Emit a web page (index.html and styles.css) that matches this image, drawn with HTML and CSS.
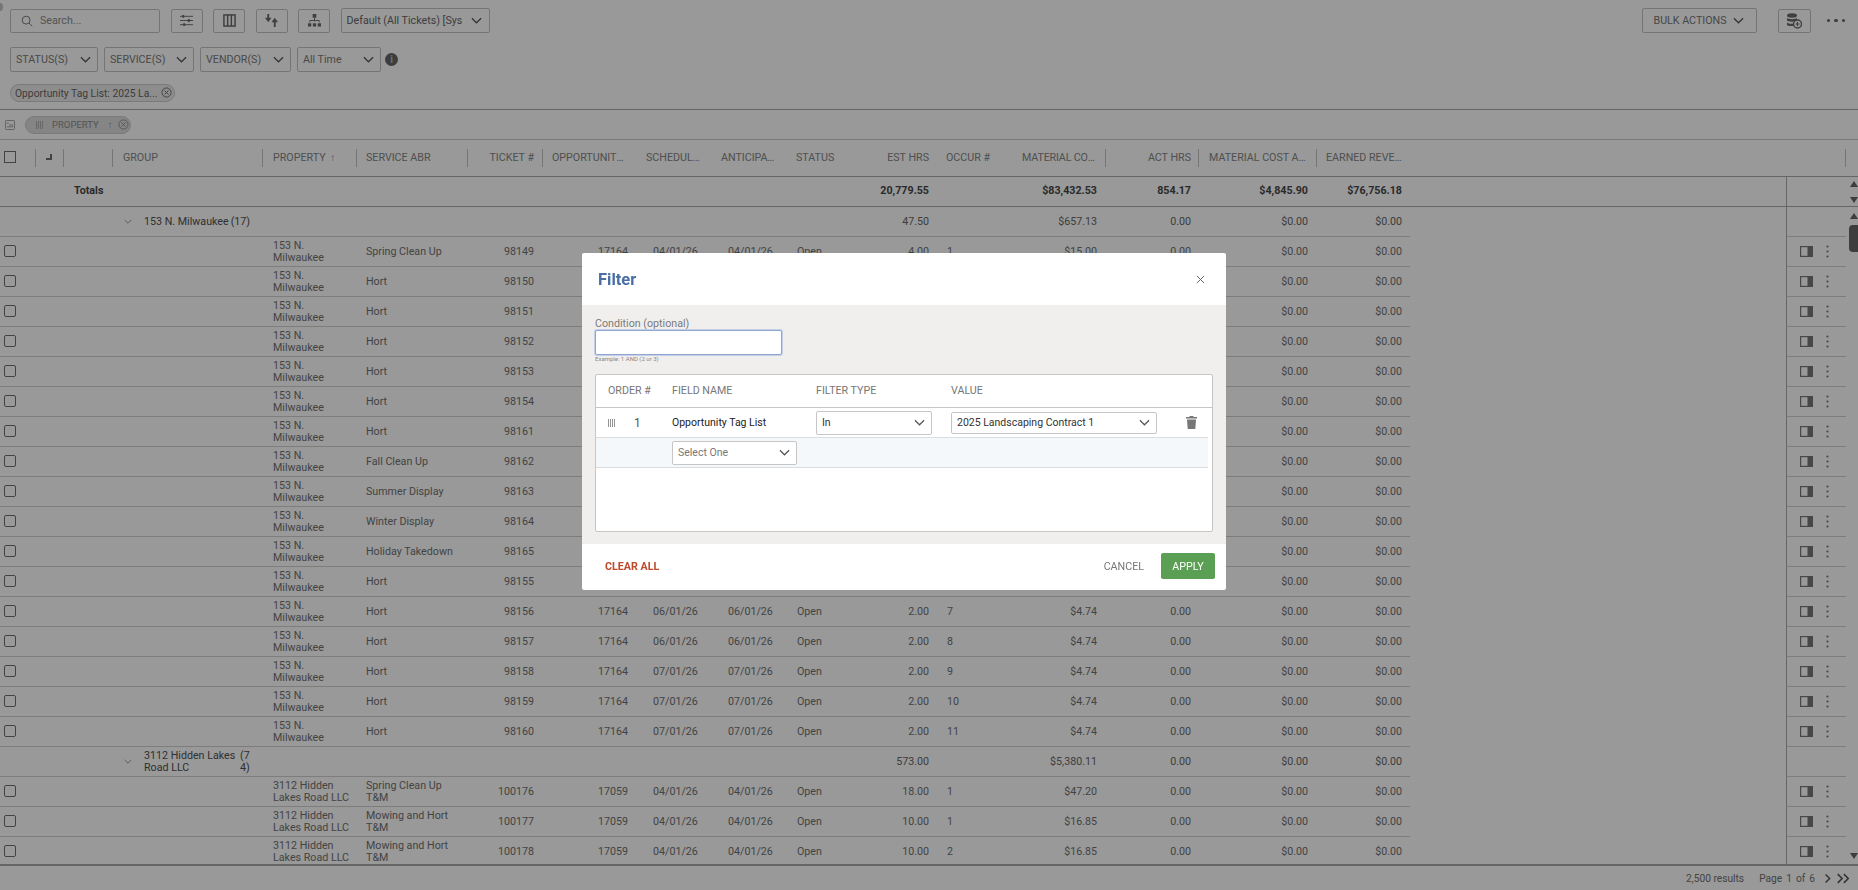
FILE: index.html
```html
<!DOCTYPE html>
<html lang="en">
<head>
<meta charset="utf-8">
<title>Tickets</title>
<link rel="stylesheet" href="styles.css">
</head>
<body>
<svg class="defs" aria-hidden="true">
  <symbol id="i-panel" viewBox="0 0 13 11"><rect x=".6" y=".6" width="11.800" height="9.800" fill="none" stroke="currentColor" stroke-width="1.200"/><rect x="7.500" y="1" width="5" height="9" fill="currentColor"/></symbol>
  <symbol id="i-kebab" viewBox="0 0 3 13"><circle cx="1.5" cy="1.5" r="1.1" fill="currentColor"/><circle cx="1.5" cy="6.5" r="1.1" fill="currentColor"/><circle cx="1.5" cy="11.5" r="1.1" fill="currentColor"/></symbol>
  <symbol id="i-chev" viewBox="0 0 12 7"><path d="M1 1l5 5 5-5" fill="none" stroke="currentColor" stroke-width="1.3"/></symbol>
  <symbol id="i-handle" viewBox="0 0 7 8"><path d="M.5 0v8M2.500 0v8M4.500 0v8M6.500 0v8" stroke="currentColor" stroke-width=".8"/></symbol>
  <symbol id="i-xc" viewBox="0 0 12 12"><circle cx="6" cy="6" r="5" fill="none" stroke="currentColor" stroke-width="1"/><path d="M3.8 3.8l4.4 4.4M8.2 3.8l-4.4 4.4" stroke="currentColor" stroke-width="1"/></symbol>
</svg>
<div class="corner-dot"></div>
<div class="page">
  <div class="toolbar">
    <div class="search"><svg class="ic-search" viewBox="0 0 14 14"><circle cx="6" cy="6" r="4.6" fill="none" stroke="currentColor" stroke-width="1"/><path d="M9.5 9.5l3.6 3.6" stroke="currentColor" stroke-width="1"/></svg><span>Search...</span></div>
    <button class="tool"><svg viewBox="0 0 14 14" class="ic"><path d="M0 2.5h14M0 7h14M0 11.5h14" stroke="currentColor" stroke-width="1"/><path d="M3.5 1v3M9.5 5.5v3M4.5 10v3" stroke="currentColor" stroke-width="2"/></svg></button>
    <button class="tool"><svg viewBox="0 0 14 14" class="ic"><rect x="1" y="1" width="12" height="12" fill="none" stroke="currentColor" stroke-width="1.6"/><path d="M5 1v12M9 1v12" stroke="currentColor" stroke-width="1.6"/></svg></button>
    <button class="tool"><svg viewBox="0 0 14 14" class="ic"><path d="M3.500 0v5" stroke="currentColor" stroke-width="2"/><path d="M0 4h7L3.500 9z" fill="currentColor"/><path d="M10.500 14V8" stroke="currentColor" stroke-width="2"/><path d="M7 9h7L10.500 4z" fill="currentColor"/></svg></button>
    <button class="tool"><svg viewBox="0 0 14 14" class="ic"><rect x="5" y="0" width="4" height="4" fill="currentColor"/><path d="M7 4v4M2 9V7h10v2" fill="none" stroke="currentColor" stroke-width="1"/><rect x="0" y="10" width="3.500" height="3.500" fill="currentColor"/><rect x="5.250" y="10" width="3.500" height="3.500" fill="currentColor"/><rect x="10.500" y="10" width="3.500" height="3.500" fill="currentColor"/></svg></button>
    <div class="sel sel-view"><span>Default (All Tickets) [Sys</span><svg class="chev"><use href="#i-chev"/></svg></div>
    <div class="bulk"><span>BULK ACTIONS</span><svg class="chev"><use href="#i-chev"/></svg></div>
    <button class="tool tool-db"><svg viewBox="0 0 16 16" class="ic ic-db"><ellipse cx="6" cy="2.500" rx="5" ry="2.200" fill="currentColor"/><path d="M1 5c1 1.500 9 1.500 10 0v2.500c-1 1.500-9 1.500-10 0zM1 9.500c1 1.500 6 1.500 7 1v2c-1 .8-6 .8-7-.5z" fill="currentColor"/><circle cx="11.500" cy="11" r="4" fill="none" stroke="currentColor" stroke-width="1.400"/><path d="M9.500 11h4M11.500 9v4" stroke="currentColor" stroke-width="1.200"/></svg></button>
    <div class="more"><i></i><i></i><i></i></div>
  </div>
  <div class="filters">
    <div class="sel sel-status"><span>STATUS(S)</span><svg class="chev"><use href="#i-chev"/></svg></div>
    <div class="sel sel-service"><span>SERVICE(S)</span><svg class="chev"><use href="#i-chev"/></svg></div>
    <div class="sel sel-vendor"><span>VENDOR(S)</span><svg class="chev"><use href="#i-chev"/></svg></div>
    <div class="sel sel-time"><span>All Time</span><svg class="chev"><use href="#i-chev"/></svg></div>
    <span class="info">i</span>
  </div>
  <div class="tags"><div class="tag"><span>Opportunity Tag List: 2025 La...</span><svg class="xc"><use href="#i-xc"/></svg></div></div>
  <div class="groupbar">
    <svg class="ic-groupbar" viewBox="0 0 11 11"><rect x=".5" y=".5" width="10" height="10" rx="1" fill="none" stroke="currentColor"/><path d="M2 3.500h2M4.500 5.500h4.500M2 7.500h7" stroke="currentColor"/></svg>
    <div class="gchip"><svg class="handle"><use href="#i-handle"/></svg><span>PROPERTY</span><span class="gchip-arrow">↑</span><svg class="xc"><use href="#i-xc"/></svg></div>
  </div>
  <div class="grid-area">
    <div class="grid-wrap">
      <table class="grid">
        <thead>
          <tr><th class="sep"><span class="cb cb-sq"></span></th><th class="sep"><svg class="ic-corner" viewBox="0 0 6 6"><path d="M4 0h2v6H0V4h4z" fill="currentColor"/></svg></th><th class="sep"></th><th class="sep">GROUP</th><th class="sep">PROPERTY <span class="sort">↑</span></th><th class="sep">SERVICE ABR</th><th class="sep">TICKET #</th><th>OPPORTUNITY TAG</th><th>SCHEDULED DATE</th><th>ANTICIPATED DATE</th><th>STATUS</th><th>EST HRS</th><th>OCCUR #</th><th class="sep">MATERIAL COST EST</th><th class="sep">ACT HRS</th><th class="sep">MATERIAL COST ACTUAL</th><th>EARNED REVENUE</th><th class="fill"></th><th class="sep-end"></th></tr>
        </thead>
        <tbody>
          <tr class="totals"><td></td><td></td><td class="tot-label">Totals</td><td></td><td></td><td></td><td></td><td></td><td></td><td></td><td></td><td>20,779.55</td><td></td><td>$83,432.53</td><td>854.17</td><td>$4,845.90</td><td>$76,756.18</td><td></td><td class="act"></td></tr>
          <tr class="grp"><td></td><td></td><td></td><td><div class="gcell"><svg class="gchev"><use href="#i-chev"/></svg><span class="gname">153 N. Milwaukee</span><span class="gcount">(17)</span></div></td><td></td><td></td><td></td><td></td><td></td><td></td><td></td><td>47.50</td><td></td><td>$657.13</td><td>0.00</td><td>$0.00</td><td>$0.00</td><td class="fill"></td><td class="act"></td></tr>
          <tr><td><span class="cb"></span></td><td></td><td></td><td></td><td>153 N. Milwaukee</td><td>Spring Clean Up</td><td>98149</td><td>17164</td><td>04/01/26</td><td>04/01/26</td><td>Open</td><td>4.00</td><td>1</td><td>$15.00</td><td>0.00</td><td>$0.00</td><td>$0.00</td><td class="fill"></td><td class="act"><svg class="panel"><use href="#i-panel"/></svg><svg class="kebab"><use href="#i-kebab"/></svg></td></tr>
          <tr><td><span class="cb"></span></td><td></td><td></td><td></td><td>153 N. Milwaukee</td><td>Hort</td><td>98150</td><td>17164</td><td>04/01/26</td><td>04/01/26</td><td>Open</td><td>2.00</td><td>1</td><td>$4.74</td><td>0.00</td><td>$0.00</td><td>$0.00</td><td class="fill"></td><td class="act"><svg class="panel"><use href="#i-panel"/></svg><svg class="kebab"><use href="#i-kebab"/></svg></td></tr>
          <tr><td><span class="cb"></span></td><td></td><td></td><td></td><td>153 N. Milwaukee</td><td>Hort</td><td>98151</td><td>17164</td><td>04/01/26</td><td>04/01/26</td><td>Open</td><td>2.00</td><td>2</td><td>$4.74</td><td>0.00</td><td>$0.00</td><td>$0.00</td><td class="fill"></td><td class="act"><svg class="panel"><use href="#i-panel"/></svg><svg class="kebab"><use href="#i-kebab"/></svg></td></tr>
          <tr><td><span class="cb"></span></td><td></td><td></td><td></td><td>153 N. Milwaukee</td><td>Hort</td><td>98152</td><td>17164</td><td>04/01/26</td><td>04/01/26</td><td>Open</td><td>2.00</td><td>3</td><td>$4.74</td><td>0.00</td><td>$0.00</td><td>$0.00</td><td class="fill"></td><td class="act"><svg class="panel"><use href="#i-panel"/></svg><svg class="kebab"><use href="#i-kebab"/></svg></td></tr>
          <tr><td><span class="cb"></span></td><td></td><td></td><td></td><td>153 N. Milwaukee</td><td>Hort</td><td>98153</td><td>17164</td><td>05/01/26</td><td>05/01/26</td><td>Open</td><td>2.00</td><td>4</td><td>$4.74</td><td>0.00</td><td>$0.00</td><td>$0.00</td><td class="fill"></td><td class="act"><svg class="panel"><use href="#i-panel"/></svg><svg class="kebab"><use href="#i-kebab"/></svg></td></tr>
          <tr><td><span class="cb"></span></td><td></td><td></td><td></td><td>153 N. Milwaukee</td><td>Hort</td><td>98154</td><td>17164</td><td>05/01/26</td><td>05/01/26</td><td>Open</td><td>2.00</td><td>5</td><td>$4.74</td><td>0.00</td><td>$0.00</td><td>$0.00</td><td class="fill"></td><td class="act"><svg class="panel"><use href="#i-panel"/></svg><svg class="kebab"><use href="#i-kebab"/></svg></td></tr>
          <tr><td><span class="cb"></span></td><td></td><td></td><td></td><td>153 N. Milwaukee</td><td>Hort</td><td>98161</td><td>17164</td><td>05/01/26</td><td>05/01/26</td><td>Open</td><td>2.00</td><td>6</td><td>$4.74</td><td>0.00</td><td>$0.00</td><td>$0.00</td><td class="fill"></td><td class="act"><svg class="panel"><use href="#i-panel"/></svg><svg class="kebab"><use href="#i-kebab"/></svg></td></tr>
          <tr><td><span class="cb"></span></td><td></td><td></td><td></td><td>153 N. Milwaukee</td><td>Fall Clean Up</td><td>98162</td><td>17164</td><td>10/01/26</td><td>10/01/26</td><td>Open</td><td>4.00</td><td>1</td><td>$15.00</td><td>0.00</td><td>$0.00</td><td>$0.00</td><td class="fill"></td><td class="act"><svg class="panel"><use href="#i-panel"/></svg><svg class="kebab"><use href="#i-kebab"/></svg></td></tr>
          <tr><td><span class="cb"></span></td><td></td><td></td><td></td><td>153 N. Milwaukee</td><td>Summer Display</td><td>98163</td><td>17164</td><td>05/15/26</td><td>05/15/26</td><td>Open</td><td>4.00</td><td>1</td><td>$15.00</td><td>0.00</td><td>$0.00</td><td>$0.00</td><td class="fill"></td><td class="act"><svg class="panel"><use href="#i-panel"/></svg><svg class="kebab"><use href="#i-kebab"/></svg></td></tr>
          <tr><td><span class="cb"></span></td><td></td><td></td><td></td><td>153 N. Milwaukee</td><td>Winter Display</td><td>98164</td><td>17164</td><td>11/15/26</td><td>11/15/26</td><td>Open</td><td>4.00</td><td>1</td><td>$15.00</td><td>0.00</td><td>$0.00</td><td>$0.00</td><td class="fill"></td><td class="act"><svg class="panel"><use href="#i-panel"/></svg><svg class="kebab"><use href="#i-kebab"/></svg></td></tr>
          <tr><td><span class="cb"></span></td><td></td><td></td><td></td><td>153 N. Milwaukee</td><td>Holiday Takedown</td><td>98165</td><td>17164</td><td>01/15/26</td><td>01/15/26</td><td>Open</td><td>4.00</td><td>1</td><td>$15.00</td><td>0.00</td><td>$0.00</td><td>$0.00</td><td class="fill"></td><td class="act"><svg class="panel"><use href="#i-panel"/></svg><svg class="kebab"><use href="#i-kebab"/></svg></td></tr>
          <tr><td><span class="cb"></span></td><td></td><td></td><td></td><td>153 N. Milwaukee</td><td>Hort</td><td>98155</td><td>17164</td><td>06/01/26</td><td>06/01/26</td><td>Open</td><td>2.00</td><td>6</td><td>$4.74</td><td>0.00</td><td>$0.00</td><td>$0.00</td><td class="fill"></td><td class="act"><svg class="panel"><use href="#i-panel"/></svg><svg class="kebab"><use href="#i-kebab"/></svg></td></tr>
          <tr><td><span class="cb"></span></td><td></td><td></td><td></td><td>153 N. Milwaukee</td><td>Hort</td><td>98156</td><td>17164</td><td>06/01/26</td><td>06/01/26</td><td>Open</td><td>2.00</td><td>7</td><td>$4.74</td><td>0.00</td><td>$0.00</td><td>$0.00</td><td class="fill"></td><td class="act"><svg class="panel"><use href="#i-panel"/></svg><svg class="kebab"><use href="#i-kebab"/></svg></td></tr>
          <tr><td><span class="cb"></span></td><td></td><td></td><td></td><td>153 N. Milwaukee</td><td>Hort</td><td>98157</td><td>17164</td><td>06/01/26</td><td>06/01/26</td><td>Open</td><td>2.00</td><td>8</td><td>$4.74</td><td>0.00</td><td>$0.00</td><td>$0.00</td><td class="fill"></td><td class="act"><svg class="panel"><use href="#i-panel"/></svg><svg class="kebab"><use href="#i-kebab"/></svg></td></tr>
          <tr><td><span class="cb"></span></td><td></td><td></td><td></td><td>153 N. Milwaukee</td><td>Hort</td><td>98158</td><td>17164</td><td>07/01/26</td><td>07/01/26</td><td>Open</td><td>2.00</td><td>9</td><td>$4.74</td><td>0.00</td><td>$0.00</td><td>$0.00</td><td class="fill"></td><td class="act"><svg class="panel"><use href="#i-panel"/></svg><svg class="kebab"><use href="#i-kebab"/></svg></td></tr>
          <tr><td><span class="cb"></span></td><td></td><td></td><td></td><td>153 N. Milwaukee</td><td>Hort</td><td>98159</td><td>17164</td><td>07/01/26</td><td>07/01/26</td><td>Open</td><td>2.00</td><td>10</td><td>$4.74</td><td>0.00</td><td>$0.00</td><td>$0.00</td><td class="fill"></td><td class="act"><svg class="panel"><use href="#i-panel"/></svg><svg class="kebab"><use href="#i-kebab"/></svg></td></tr>
          <tr><td><span class="cb"></span></td><td></td><td></td><td></td><td>153 N. Milwaukee</td><td>Hort</td><td>98160</td><td>17164</td><td>07/01/26</td><td>07/01/26</td><td>Open</td><td>2.00</td><td>11</td><td>$4.74</td><td>0.00</td><td>$0.00</td><td>$0.00</td><td class="fill"></td><td class="act"><svg class="panel"><use href="#i-panel"/></svg><svg class="kebab"><use href="#i-kebab"/></svg></td></tr>
          <tr class="grp"><td></td><td></td><td></td><td><div class="gcell"><svg class="gchev"><use href="#i-chev"/></svg><span class="gname gname-wrap">3112 Hidden Lakes Road LLC</span><span class="gcount gcount-wrap">(74)</span></div></td><td></td><td></td><td></td><td></td><td></td><td></td><td></td><td>573.00</td><td></td><td>$5,380.11</td><td>0.00</td><td>$0.00</td><td>$0.00</td><td class="fill"></td><td class="act"></td></tr>
          <tr><td><span class="cb"></span></td><td></td><td></td><td></td><td>3112 Hidden Lakes Road LLC</td><td>Spring Clean Up T&amp;M</td><td>100176</td><td>17059</td><td>04/01/26</td><td>04/01/26</td><td>Open</td><td>18.00</td><td>1</td><td>$47.20</td><td>0.00</td><td>$0.00</td><td>$0.00</td><td class="fill"></td><td class="act"><svg class="panel"><use href="#i-panel"/></svg><svg class="kebab"><use href="#i-kebab"/></svg></td></tr>
          <tr><td><span class="cb"></span></td><td></td><td></td><td></td><td>3112 Hidden Lakes Road LLC</td><td>Mowing and Hort T&amp;M</td><td>100177</td><td>17059</td><td>04/01/26</td><td>04/01/26</td><td>Open</td><td>10.00</td><td>1</td><td>$16.85</td><td>0.00</td><td>$0.00</td><td>$0.00</td><td class="fill"></td><td class="act"><svg class="panel"><use href="#i-panel"/></svg><svg class="kebab"><use href="#i-kebab"/></svg></td></tr>
          <tr><td><span class="cb"></span></td><td></td><td></td><td></td><td>3112 Hidden Lakes Road LLC</td><td>Mowing and Hort T&amp;M</td><td>100178</td><td>17059</td><td>04/01/26</td><td>04/01/26</td><td>Open</td><td>10.00</td><td>2</td><td>$16.85</td><td>0.00</td><td>$0.00</td><td>$0.00</td><td class="fill"></td><td class="act"><svg class="panel"><use href="#i-panel"/></svg><svg class="kebab"><use href="#i-kebab"/></svg></td></tr>
        </tbody>
      </table>
    </div>
    <div class="scrollcol">
      <div class="sb-head"></div>
      <div class="sb-totals"><i class="tri-up"></i><i class="tri-down"></i></div>
      <div class="sb-body"><i class="tri-up"></i><b class="thumb"></b><i class="tri-down tri-end"></i></div>
    </div>
  </div>
  <div class="pager">
    <span class="results">2,500 results</span>
    <span>Page</span><span>1</span><span>of</span><span>6</span>
    <svg class="pg" viewBox="0 0 10 12"><path d="M2 1l5 5-5 5" fill="none" stroke="currentColor" stroke-width="1.800"/></svg>
    <svg class="pg pg-2" viewBox="0 0 16 12"><path d="M2 1l5 5-5 5M9 1l5 5-5 5" fill="none" stroke="currentColor" stroke-width="1.800"/></svg>
  </div>
</div>
<div class="overlay">
  <div class="modal">
    <div class="modal-head"><h2>Filter</h2><svg class="close" viewBox="0 0 10 10"><path d="M1 1l8 8M9 1l-8 8" stroke="currentColor" stroke-width="1.100"/></svg></div>
    <div class="modal-body">
      <label class="cond-label">Condition (optional)</label>
      <div class="cond-input"></div>
      <div class="cond-hint">Example: 1 AND (2 or 3)</div>
      <div class="ftable">
        <div class="frow fhead"><span>ORDER #</span><span>FIELD NAME</span><span>FILTER TYPE</span><span>VALUE</span><span></span></div>
        <div class="frow fdata">
          <span class="order"><svg class="handle"><use href="#i-handle"/></svg><b>1</b></span>
          <span class="fname">Opportunity Tag List</span>
          <div class="msel msel-type"><span>In</span><svg class="chev"><use href="#i-chev"/></svg></div>
          <div class="msel msel-value"><span>2025 Landscaping Contract 1</span><svg class="chev"><use href="#i-chev"/></svg></div>
          <svg class="trash" viewBox="0 0 11 13"><path d="M3.500 1V0h4v1H11v1.500H0V1zM1 3.500h9L9.300 13H1.700z" fill="currentColor"/></svg>
        </div>
        <div class="frow fnew">
          <span></span>
          <div class="msel msel-field"><span>Select One</span><svg class="chev"><use href="#i-chev"/></svg></div>
        </div>
      </div>
    </div>
    <div class="modal-foot">
      <button class="btn-clear">CLEAR ALL</button>
      <button class="btn-cancel">CANCEL</button>
      <button class="btn-apply">APPLY</button>
    </div>
  </div>
</div>
</body>
</html>
```
FILE: styles.css
```css
* { box-sizing: border-box; }
html, body { margin: 0; height: 100%; overflow: hidden; }
body { font-family: Roboto, "Liberation Sans", sans-serif; font-size: 10.7px; color: #707070; background: #fff; }
button { font-family: inherit; }
.defs { display: none; }

.corner-dot { position: absolute; left: -3px; top: 3px; width: 6px; height: 8px; border-radius: 50%; background: #c4c4c4; }

.page { height: 100vh; display: flex; flex-direction: column; }

.toolbar { display: flex; align-items: center; height: 25px; margin-top: 8px; padding: 0 13px 0 10px; }
.search { width: 150px; height: 24px; border: 1px solid #c4c4c4; border-radius: 2px; display: flex; align-items: center; padding-left: 10px; gap: 7px; font-size: 10.700px; color: #8a8a8a; }
.ic-search { width: 12px; height: 12px; color: #666; }
.tool { width: 32px; height: 24px; margin-left: 10.500px; border: 1px solid #c4c4c4; border-radius: 2px; background: #fff; padding: 0; display: flex; align-items: center; justify-content: center; color: #6a6a6a; }
.ic { width: 13px; height: 13px; display: block; }
.sel { height: 25px; border: 1px solid #c4c4c4; border-radius: 2px; display: flex; align-items: center; justify-content: space-between; padding: 0 6px 0 5px; font-size: 10.700px; color: #7a7a7a; white-space: nowrap; }
.chev { width: 11px; height: 7px; color: #555; flex: none; }
.sel-view { width: 149px; margin-left: 10.500px; color: #666; padding-right: 7px; }
.bulk { margin-left: auto; width: 115px; height: 25px; border: 1px solid #c4c4c4; border-radius: 2px; display: flex; align-items: center; gap: 6px; padding-left: 11px; font-size: 10.700px; color: #777; }
.tool-db { margin-left: 21px; width: 33px; }
.ic-db { width: 16px; height: 16px; }
.more { margin-left: 16px; display: flex; gap: 4px; }
.more i { width: 3.500px; height: 3.500px; border-radius: 50%; background: #666; }

.filters { display: flex; align-items: center; height: 25px; margin-top: 14px; padding-left: 10px; gap: 6px; }
.sel-status { width: 88px; }
.sel-service { width: 90px; }
.sel-vendor { width: 91px; }
.sel-time { width: 84px; }
.info { width: 13px; height: 13px; border-radius: 50%; background: #666; color: #bbb; font-size: 10px; font-weight: 700; display: flex; align-items: center; justify-content: center; margin-left: -2px; }

.tags { height: 18px; margin-top: 12px; padding-left: 10px; display: flex; }
.tag { width: 165px; height: 18px; border: 1px solid #ccc; border-radius: 9px; background: #ececec; display: flex; align-items: center; gap: 4px; padding-left: 4px; font-size: 10.300px; color: #666; white-space: nowrap; }
.xc { width: 11px; height: 11px; color: #666; flex: none; position: relative; top: -1px; }

.groupbar { height: 30px; margin-top: 7px; border-top: 1px solid #aaa; display: flex; align-items: center; padding-left: 5px; gap: 10px; flex: none; }
.ic-groupbar { width: 10px; height: 10px; color: #999; }
.gchip { width: 106px; height: 18px; border: 1px solid #ccc; border-radius: 9px; background: #dedede; display: flex; align-items: center; padding-left: 10px; font-size: 9.500px; color: #8c8c8c; }
.handle { width: 7px; height: 8px; color: #a0a0a0; margin-right: 9px; flex: none; }
.gchip-arrow { margin: 0 6px 0 9px; }
.gchip .xc { top: 0; color: #8c8c8c; }

.grid-area { flex: 1; min-height: 0; display: flex; border-top: 1px solid #ccc; border-bottom: 2px solid #aaa; }
.grid-wrap { width: 1846px; overflow: hidden; flex: none; }
.grid { width: 1846px; table-layout: fixed; border-collapse: separate; border-spacing: 0; }
.grid th { height: 37px; border-bottom: 1px solid #aaa; font-weight: 400; font-size: 10.700px; color: #858585; text-align: left; padding: 0 8px 2px; white-space: nowrap; overflow: hidden; text-overflow: ellipsis; position: relative; }
.grid td { height: 30px; padding: 0 8px; border-bottom: 1px solid #d0d0d0; line-height: 12px; vertical-align: middle; }
.sep::after, .sep-end::after { content: ""; position: absolute; right: 0; top: 9px; height: 18px; width: 1px; background: #c4c4c4; }

.grid th:nth-child(1) { width: 36px; padding: 0 0 2px 4px; }
.grid th:nth-child(2) { width: 28px; }
.grid th:nth-child(3) { width: 49px; }
.grid th:nth-child(4) { width: 150px; padding-left: 10px; }
.grid th:nth-child(5) { width: 94px; padding-left: 10px; }
.grid th:nth-child(6) { width: 111px; padding-left: 9px; }
.grid th:nth-child(7) { width: 75px; text-align: right; padding-right: 9px; }
.grid th:nth-child(8) { width: 95px; padding-left: 9px; }
.grid th:nth-child(9) { width: 75px; }
.grid th:nth-child(10) { width: 75px; }
.grid th:nth-child(11) { width: 75px; }
.grid th:nth-child(12) { width: 74px; text-align: right; }
.grid th:nth-child(13) { width: 85px; padding-left: 9px; }
.grid th:nth-child(14) { width: 84px; text-align: right; padding-left: 0; padding-right: 9px; letter-spacing: -.15px; }
.grid th:nth-child(15) { width: 93px; text-align: right; }
.grid th:nth-child(16) { width: 118px; padding-left: 10px; text-align: left; }
.grid th:nth-child(17) { width: 93px; padding-left: 9px; }
.grid th:nth-child(18) { width: 376px; }
.grid th:nth-child(19) { width: 60px; padding: 0; }
.sort { font-size: 10px; margin-left: 2px; }

.grid td:nth-child(1) { padding: 0 0 0 4px; }
.grid td:nth-child(4) { padding: 0; }
.grid td:nth-child(5) { padding-left: 10px; padding-right: 5px; }
.grid td:nth-child(6) { padding-left: 9px; }
.grid td:nth-child(7) { text-align: right; padding-right: 9px; }
.grid td:nth-child(8) { text-align: right; padding-right: 10px; }
.grid td:nth-child(9), .grid td:nth-child(10) { padding-left: 15px; padding-right: 0; }
.grid td:nth-child(11) { padding-left: 9px; }
.grid td:nth-child(12) { text-align: right; }
.grid td:nth-child(13) { padding-left: 10px; }
.grid td:nth-child(14) { text-align: right; padding-right: 9px; }
.grid td:nth-child(15) { text-align: right; }
.grid td:nth-child(16) { text-align: right; padding-right: 9px; }
.grid td:nth-child(17) { text-align: right; }
.grid td.fill { border-bottom: 0; }
.grid td.act { border-left: 1px solid #aaa; padding: 0; color: #777; }

.grid .totals td { border-bottom: 1px solid #aaa; font-weight: 700; color: #474747; white-space: nowrap; padding-bottom: 2px; }
.grid .totals td.tot-label { padding-left: 10px; padding-right: 0; }
.grp td { color: #666; }
.gcell { display: flex; align-items: center; }
.gchev { width: 8px; height: 5px; color: #8c8c8c; margin: 0 11px 0 11px; flex: none; }
.gname { color: #505050; margin-left: 1px; }
.gcount { color: #505050; margin-left: 2px; }
.gname-wrap { width: 96px; }
.gcount-wrap { width: 11px; word-break: break-all; margin-left: 0; }

.cb { display: block; width: 12px; height: 12px; border: 1.300px solid #707070; border-radius: 2px; }
td .cb { margin-top: -1px; }
.cb-sq { border-radius: 0; }
.ic-corner { width: 6px; height: 6px; color: #707070; display: block; margin-left: 2px; }
.panel { width: 13px; height: 11px; margin-left: 13px; vertical-align: middle; }
.kebab { width: 3px; height: 13px; margin-left: 13px; vertical-align: middle; }

.scrollcol { flex: 1; display: flex; flex-direction: column; align-items: flex-end; }
.sb-head { width: 100%; height: 37px; border-bottom: 1px solid #aaa; }
.sb-totals { width: 100%; height: 30px; border-bottom: 1px solid #aaa; display: flex; flex-direction: column; align-items: flex-end; justify-content: space-between; padding: 4px 0 3px; }
.sb-body { flex: 1; width: 100%; display: flex; flex-direction: column; align-items: flex-end; padding: 6px 0 5px; }
.tri-up { width: 0; height: 0; border: 4px solid transparent; border-top: 0; border-bottom: 6px solid #666; }
.tri-down { width: 0; height: 0; border: 4px solid transparent; border-bottom: 0; border-top: 6px solid #666; }
.tri-end { margin-top: auto; }
.thumb { width: 9px; height: 27px; background: #666; border-radius: 4px 0 0 4px; margin-top: 6px; }

.pager { height: 24px; flex: none; display: flex; align-items: center; justify-content: flex-end; padding-right: 8px; font-size: 10.200px; color: #707070; gap: 4px; white-space: nowrap; }
.results { margin-right: 11px; }
.pg { width: 8px; height: 11px; color: #555; margin-left: 5px; }
.pg-2 { width: 14px; margin-left: 0; }

.overlay { position: fixed; inset: 0; background: rgba(0, 0, 0, .4); }
.modal { position: absolute; left: 582px; top: 253px; width: 644px; height: 337px; background: #fff; border-radius: 2px; display: flex; flex-direction: column; overflow: hidden; }
.modal-head { height: 52px; flex: none; display: flex; align-items: center; justify-content: space-between; padding: 0 21px 0 16px; }
.modal-head h2 { margin: 0; font-size: 16.500px; font-weight: 700; color: #4a6fa5; }
.close { width: 9px; height: 9px; color: #666; }
.modal-body { height: 239px; flex: none; background: #f0efed; padding: 13px 13px 12px 13px; display: flex; flex-direction: column; }
.cond-label { font-size: 10.700px; line-height: 12px; color: #7a7a7a; }
.cond-input { width: 187px; height: 25px; background: #fff; border: 1px solid #8fa6d3; border-radius: 2px; box-shadow: 0 0 0 1px #c4d0e8; }
.cond-hint { font-size: 6px; line-height: 8px; color: #888; margin-bottom: 11px; }
.ftable { flex: 1; background: #fff; border: 1px solid #c6c6c6; border-radius: 2px; padding-right: 4px; }
.frow { display: grid; grid-template-columns: 76px 144px 135px 221px 1fr; align-items: center; height: 30px; }
.fhead { height: 33px; margin-right: -4px; border-bottom: 1px solid #c6c6c6; font-size: 10.700px; color: #777; padding-bottom: 2px; }
.fhead span:first-child { padding-left: 12px; }
.fdata { border-bottom: 1px solid #dcdcdc; color: #222; font-size: 10.500px; }
.order { display: flex; align-items: center; padding-left: 12px; }
.order .handle { width: 7px; height: 8px; color: #777; margin-right: 19px; }
.order b { font-weight: 400; font-size: 12px; color: #555; }
.fname { color: #222; }
.msel { height: 24px; display: flex; align-items: center; justify-content: space-between; background: #fff; border: 1px solid #c6c6c6; border-radius: 2px; padding: 0 6px 0 5px; font-size: 10.500px; color: #333; }
.msel-type { width: 116px; }
.msel-value { width: 206px; height: 22px; }
.msel-field { width: 125px; color: #777; }
.trash { width: 11px; height: 13px; color: #777; margin-left: 14px; }
.fnew { height: 30px; background: #f5f8fb; border-bottom: 1px solid #dcdcdc; }
.modal-foot { flex: 1; display: flex; align-items: center; padding: 0 11px 2px 23px; }
.modal-foot button { border: 0; background: none; padding: 0; font-size: 10.700px; }
.btn-clear { color: #c0492c; font-weight: 700; margin-right: auto; }
.btn-cancel { color: #777; margin-right: 17px; }
.modal-foot .btn-apply { width: 54px; height: 26px; background: #5b9f55; color: #fff; border-radius: 2px; }
```
